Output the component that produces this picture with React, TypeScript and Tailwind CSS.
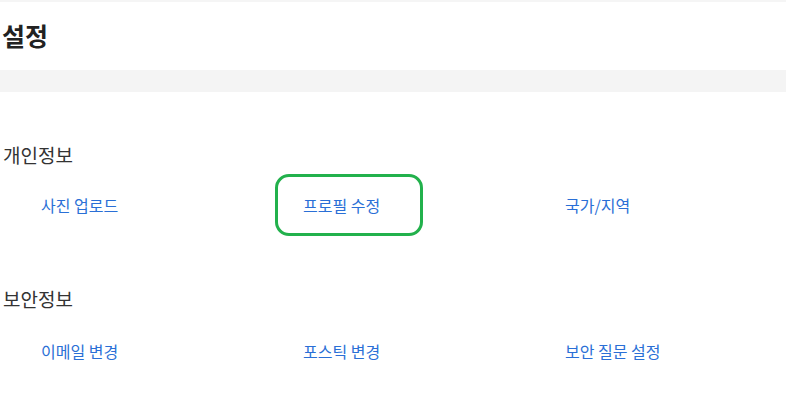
import React from "react";

const font = { fontFamily: '"Noto Sans CJK KR", "Noto Sans", sans-serif' };

function Link({ label, highlight }: { label: string; highlight?: boolean }) {
  return (
    <div className="pl-[41px]">
      <span className="relative inline-block text-[16px] leading-[20px] text-[#2a6fd6]">
        {label}
        {highlight && (
          <span className="pointer-events-none absolute left-[-28px] top-[-21px] h-[62px] w-[148px] rounded-[14px] border-[3px] border-[#22b14c]" />
        )}
      </span>
    </div>
  );
}

export default function App() {
  return (
    <div className="min-h-[420px] w-full bg-white" style={font}>
      <div className="h-[2px] bg-[#f5f5f5]" />
      <h1 className="pl-[2px] pt-[17px] text-[25px] font-bold leading-[32px] text-[#222]">설정</h1>
      <div className="mt-[19px] h-[22px] bg-[#f4f4f4]" />
      <section className="mt-[51px]">
        <h2 className="pl-[3px] text-[19px] leading-[24px] text-[#333]">개인정보</h2>
        <div className="mt-[26px] grid grid-cols-3">
          <Link label="사진 업로드" />
          <Link label="프로필 수정" highlight />
          <Link label="국가/지역" />
        </div>
      </section>
      <section className="mt-[70px]">
        <h2 className="pl-[3px] text-[19px] leading-[24px] text-[#333]">보안정보</h2>
        <div className="mt-[28px] grid grid-cols-3">
          <Link label="이메일 변경" />
          <Link label="포스틱 변경" />
          <Link label="보안 질문 설정" />
        </div>
      </section>
    </div>
  );
}
